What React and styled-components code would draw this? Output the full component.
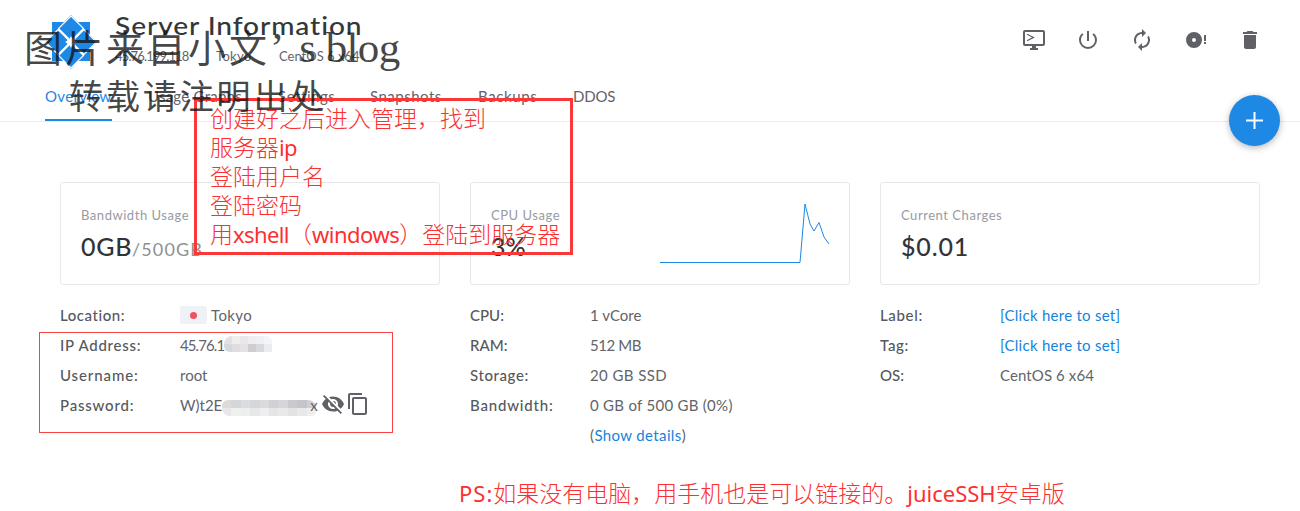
import React from "react";
import styled, { createGlobalStyle } from "styled-components";

const Global = createGlobalStyle`
  * { box-sizing: border-box; }
  body { margin: 0; background: #fff; color: #626469; font: 15px/30px Lato, "Noto Sans CJK SC", sans-serif; overflow: hidden; }
`;
const Page = styled.div`position: relative; width: 1300px; height: 511px; overflow: hidden; background: #fff;`;
const Header = styled.header`height: 122px; border-bottom: 1px solid #eaecee; display: flex; flex-direction: column; justify-content: space-between;`;
const HeaderTop = styled.div`display: flex; padding: 9px 38px 0 45px; height: 82px;`;
const Logo = styled.svg`width: 52px; height: 54px; margin: 6px 18px 0 0;`;
const Heading = styled.div`flex: 1;`;
const Title = styled.h1`margin: 0 0 2px; font-size: 25px; line-height: 32px; font-weight: 500; color: #33373b; letter-spacing: .8px; white-space: nowrap; transform: scaleX(1.125); transform-origin: left;`;
const Meta = styled.div`display: grid; grid-template-columns: 101px 63px 100px; font-size: 13px; line-height: 26px; white-space: nowrap;`;
const Track = styled.span`letter-spacing: ${p => p.$ls || 0}px;`;
const Toolbar = styled.div`display: flex; gap: 30px; padding-top: 19px;`;
const ToolIcon = styled.svg`width: 24px; height: 24px; fill: #606166; overflow: visible;`;
const Tabs = styled.nav`display: grid; grid-template-columns: 103px 130px 92px 108px 95px 60px; padding-left: 45px; font-size: 15px;`;
const Tab = styled.a`justify-self: start; height: 39px; line-height: 28px; white-space: nowrap; letter-spacing: ${p => p.$ls || 0}px; color: ${p => p.$active ? "#1e88e5" : "#626469"}; border-bottom: 2px solid ${p => p.$active ? "#1e88e5" : "transparent"};`;
const Fab = styled.button`position: absolute; left: 1229px; top: 95px; width: 51px; height: 51px; border: 0; padding: 0; border-radius: 50%; background: #1e88e5; box-shadow: 0 2px 7px rgba(0,0,0,.28); display: grid; place-items: center;`;
const Grid = styled.main`display: grid; grid-template-columns: repeat(3, 380px); column-gap: 30px; padding: 60px 60px 0;`;
const Card = styled.section`display: flex; height: 103px; border: 1px solid #e6e8ea; border-radius: 3px; padding: 20px;`;
const CardText = styled.div`flex: 1;`;
const CardLabel = styled.div`font-size: 13px; line-height: 24px; color: #989b9f; letter-spacing: .54px;`;
const CardValue = styled.div`font-size: 25px; line-height: 38px; font-weight: 500; color: #303438; letter-spacing: ${p => p.$ls || 0}px; white-space: nowrap;`;
const Quota = styled.small`font-size: 18px; font-weight: 400; color: #8d9094; letter-spacing: 1.100px;`;
const Chart = styled.svg`width: 170px; height: 64px; overflow: visible; margin-right: -1px;`;
const Details = styled.dl`margin: 15px 0 0; display: grid; grid-template-columns: 120px 1fr; grid-auto-rows: 30px;`;
const Name = styled.dt`font-weight: 500; color: #55585d; letter-spacing: ${p => p.$ls || 0}px;`;
const Value = styled.dd`margin: 0; display: flex; align-items: center; white-space: nowrap; letter-spacing: ${p => p.$ls || 0}px;`;
const Link = styled.a`color: #1583dc;`;
const Flag = styled.span`width: 27px; height: 18px; border-radius: 2px; background: #eff1f6; display: grid; place-items: center; margin-right: 4px; &::after { content: ""; width: 7px; height: 7px; border-radius: 50%; background: #f05261; }`;
const Mosaic = styled.svg`flex: none; width: ${p => p.$w}px; height: 16px; border-radius: ${p => p.$r}; margin-top: ${p => p.$mt}px;`;
const Tail = styled.span`margin: 0 3px 0 -6px;`;
const RowIcon = styled.svg`flex: none; width: 24px; height: 24px; fill: #606166; margin: -3px 1px 0 0;`;
const Red = styled.div`position: absolute; color: #fb3030; font: 300 23px/29px "Noto Sans CJK SC", sans-serif; white-space: nowrap;`;
const Note = styled(Red)`left: 194px; top: 98px; width: 379px; height: 157px; border: 3px solid #fb3838; padding: 2px 13px;`;
const Ps = styled(Red)`left: 459px; top: 478px;`;
const Latin = styled.span`font-family: "Noto Sans", sans-serif; font-weight: 400; font-size: 22px; line-height: 20px; letter-spacing: ${p => p.$ls || 0}px;`;
const ThinFrame = styled.div`position: absolute; left: 39px; top: 332px; width: 354px; height: 101px; border: 1px solid #fb4343;`;
const Watermark = styled.div`position: absolute; left: ${p => p.$x}px; top: ${p => p.$y}px; font: ${p => p.$w} ${p => p.$s}px/50px "Noto Sans CJK SC", sans-serif; color: rgba(20,20,20,.8); letter-spacing: ${p => p.$ls || 0}px; white-space: nowrap;`;
const Serif = styled.span`font: 400 43px/50px "Liberation Serif", serif; letter-spacing: -.6px;`;
const Apostrophe = styled.span`letter-spacing: 15px;`;

const ipTiles = ["#e2e2e6","#eeeeef","#e8e7e9","#efedf0","#eff0f3","#f5f5f8","#d8d7da","#dedee1","#e6e2e4","#cfcdd1","#d8d9da","#ebecf2"];
const pwTiles = ["#dedada","#d5d6da","#d9dce0","#d6d5d9","#dadadd","#d1d1d5","#d5d6d9","#c9c9ce","#c4c5ca","#d0d0d4","#e7e7e7","#f0f0ef","#eeeeef","#e7e6e8","#eeeeef","#e5e5e7","#e9e9e9","#e3e4e1","#e9e9e9","#eeeef0"];
function Redacted({ tiles, width, radius, shift }) {
  const n = tiles.length / 2;
  return <Mosaic $w={width} $r={radius} $mt={shift} viewBox={`0 0 ${n} 2`} preserveAspectRatio="none" shapeRendering="crispEdges">
    {tiles.map((c, i) => <rect key={i} x={i % n} y={Math.floor(i / n)} width="1" height="1" fill={c} />)}
  </Mosaic>;
}

export default function App() {
  return <><Global /><Page>
    <Header>
      <HeaderTop>
        <Logo viewBox="0 0 52 54">
          <path fill="#1e88e5" d="M7 7H19L26 0 33 7H45V20L52 27 45 34V46H33L26 54 19 46H7V34L0 27 7 20Z" />
          <path stroke="#fff" strokeWidth="1.200" fill="none" d="M26 1L38.500 13.500 26 26 13.500 13.500ZM26 28L38.500 40.500 26 53 13.500 40.500ZM13 14.500L25.500 27 13 39.500 .5 27ZM39 14.500L51.500 27 39 39.500 26.500 27Z" />
          <path fill="#fff" d="M26 21L27.500 24 31 22.500 29.500 25.500 32 27 29.500 28.500 31 31.500 27.500 30 26 33 24.500 30 21 31.500 22.500 28.500 20 27 22.500 25.500 21 22.500 24.500 24Z" />
        </Logo>
        <Heading>
          <Title>Server Information</Title>
          <Meta><Track $ls={-0.85}>45.76.199.118</Track><Track $ls={0.3}>Tokyo</Track><Track>CentOS 6 x64</Track></Meta>
        </Heading>
        <Toolbar>
          <ToolIcon viewBox="0 0 24 24"><path d="M21 2H3c-1.100 0-2 .9-2 2v12c0 1.100.9 2 2 2h7v2H8v2h8v-2h-2v-2h7c1.100 0 2-.9 2-2V4c0-1.100-.9-2-2-2zm0 14H3V4h18v12z" /><path fill="none" stroke="#606166" strokeWidth="1.200" d="M5 6.200l6.500 3.200-6.500 3.300" /></ToolIcon>
          <ToolIcon viewBox="0 0 24 24"><path d="M13 3h-2v10h2V3zm4.830 2.170l-1.420 1.420A6.920 6.920 0 0 1 19 12c0 3.870-3.130 7-7 7s-7-3.130-7-7c0-2.190 1.010-4.140 2.580-5.420L6.170 5.170A8.932 8.932 0 0 0 3 12a9 9 0 0 0 18 0c0-2.740-1.230-5.180-3.170-6.830z" /></ToolIcon>
          <ToolIcon viewBox="0 0 24 24"><path d="M12 6v3l4-4-4-4v3c-4.420 0-8 3.580-8 8 0 1.570.46 3.030 1.240 4.260L6.700 14.800A5.870 5.870 0 0 1 6 12c0-3.310 2.690-6 6-6zm6.760 1.740L17.300 9.200c.44.84.7 1.790.7 2.800 0 3.310-2.690 6-6 6v-3l-4 4 4 4v-3c4.420 0 8-3.580 8-8 0-1.570-.46-3.030-1.240-4.260z" /></ToolIcon>
          <ToolIcon viewBox="0 0 24 24"><path fillRule="evenodd" d="M10 4a8 8 0 1 0 0 16 8 8 0 0 0 0-16zm0 6a2 2 0 1 1 0 4 2 2 0 0 1 0-4zM20 7h2v6h-2zm0 7h2v2h-2z" /></ToolIcon>
          <ToolIcon viewBox="0 0 24 24"><path d="M6 19c0 1.100.9 2 2 2h8c1.100 0 2-.9 2-2V7H6v12zM19 4h-3.500l-1-1h-5l-1 1H5v2h14V4z" /></ToolIcon>
        </Toolbar>
      </HeaderTop>
      <Tabs>
        <Tab $active $ls={0.35}>Overview</Tab><Tab $ls={0.25}>Usage Graphs</Tab><Tab $ls={0.55}>Settings</Tab><Tab $ls={0.5}>Snapshots</Tab><Tab $ls={0.6}>Backups</Tab><Tab $ls={-0.2}>DDOS</Tab>
      </Tabs>
    </Header>
    <Grid>
      <Card><CardText><CardLabel>Bandwidth Usage</CardLabel><CardValue $ls={0.7}>0GB<Quota>/500GB</Quota></CardValue></CardText></Card>
      <Card><CardText><CardLabel>CPU Usage</CardLabel><CardValue>3%</CardValue></CardText>
        <Chart viewBox="0 0 170 64"><path fill="none" stroke="#1e88e5" d="M0 59.500H140L145 1 150 21 154 28 159 19.500 164 34 169 41" /></Chart></Card>
      <Card><CardText><CardLabel>Current Charges</CardLabel><CardValue $ls={0.85}>$0.01</CardValue></CardText></Card>
      <Details>
        <Name $ls={0.55}>Location:</Name><Value $ls={0.4}><Flag />Tokyo</Value>
        <Name $ls={0.75}>IP Address:</Name><Value $ls={-0.9}>45.76.1<Redacted tiles={ipTiles} width={48} radius="8px 6px 0 6px" shift={-2} /></Value>
        <Name $ls={0.9}>Username:</Name><Value>root</Value>
        <Name $ls={0.8}>Password:</Name><Value>W)t2E<Redacted tiles={pwTiles} width={94} radius="6px 8px 5px 8px" shift={5} /><Tail>x</Tail>
          <RowIcon viewBox="0 0 24 24"><path d="M12 7c2.760 0 5 2.240 5 5 0 .65-.13 1.260-.36 1.830l2.920 2.920c1.510-1.260 2.700-2.890 3.430-4.750-1.730-4.390-6-7.500-11-7.500-1.400 0-2.740.25-3.980.7l2.160 2.160C10.740 7.130 11.350 7 12 7zM2 4.270l2.740 2.740A11.800 11.800 0 0 0 1 12c1.730 4.390 6 7.500 11 7.500 1.550 0 3.030-.3 4.380-.84l3.350 3.340L21 20.730 3.270 3 2 4.270zM7.530 9.800l1.550 1.550A3 3 0 0 0 12.650 14.920l1.550 1.550A5 5 0 0 1 7.530 9.800zm4.310-.78l3.150 3.150.02-.16a3 3 0 0 0-3.170-2.990z" /></RowIcon>
          <RowIcon viewBox="0 0 24 24"><path d="M16 1H4c-1.100 0-2 .9-2 2v14h2V3h12V1zm3 4H8c-1.100 0-2 .9-2 2v14c0 1.100.9 2 2 2h11c1.100 0 2-.9 2-2V7c0-1.100-.9-2-2-2zm0 16H8V7h11v14z" /></RowIcon></Value>
      </Details>
      <Details>
        <Name>CPU:</Name><Value>1 vCore</Value><Name>RAM:</Name><Value $ls={-0.4}>512 MB</Value>
        <Name $ls={0.6}>Storage:</Name><Value $ls={0.4}>20 GB SSD</Value><Name $ls={0.8}>Bandwidth:</Name><Value $ls={0.28}>0 GB of 500 GB (0%)</Value>
        <Name /><Value $ls={0.37}>(<Link>Show details</Link>)</Value>
      </Details>
      <Details>
        <Name $ls={0.65}>Label:</Name><Value $ls={0.27}><Link>[Click here to set]</Link></Value><Name $ls={0.7}>Tag:</Name><Value $ls={0.27}><Link>[Click here to set]</Link></Value>
        <Name>OS:</Name><Value $ls={0.1}>CentOS 6 x64</Value>
      </Details>
    </Grid>
    <Fab><svg width="17" height="17" viewBox="0 0 17 17"><path stroke="#fff" strokeWidth="2" d="M8.500 0V17M0 8.500H17" /></svg></Fab>
    <ThinFrame />
    <Note>创建好之后进入管理，找到<br />服务器<Latin $ls={-0.6}>ip</Latin><br />登陆用户名<br />登陆密码<br />用<Latin $ls={-0.6}>xshell</Latin>（<Latin $ls={-0.5}>windows</Latin>）登陆到服务器</Note>
    <Ps><Latin $ls={1}>PS:</Latin>如果没有电脑，用手机也是可以链接的。<Latin>juiceSSH</Latin>安卓版</Ps>
    <Watermark $x={24} $y={21} $s={38} $w={400} $ls={3}>图片来自小文<Serif><Apostrophe>’</Apostrophe>s blog</Serif></Watermark>
    <Watermark $x={69} $y={70} $s={34} $w={400} $ls={2.900}>转载请注明出处</Watermark>
  </Page></>;
}
